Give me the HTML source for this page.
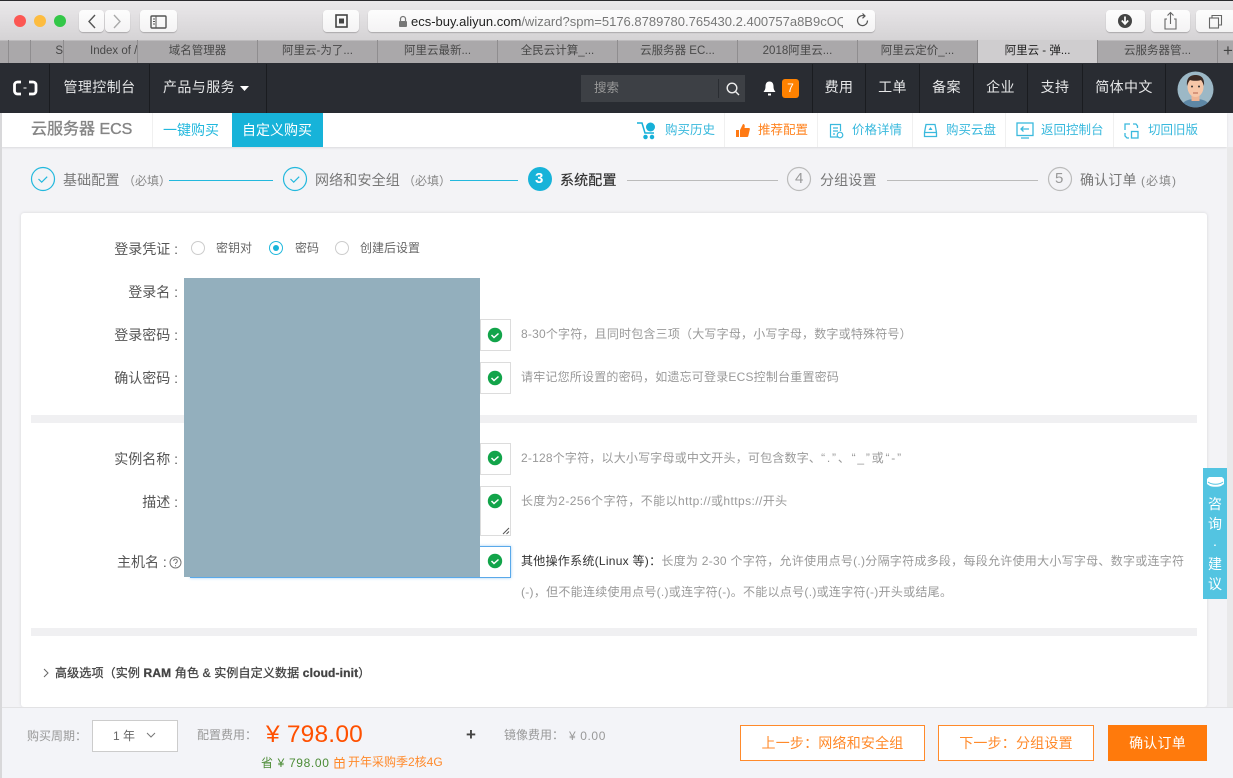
<!DOCTYPE html>
<html lang="zh-CN"><head><meta charset="utf-8"><title>阿里云 - 弹性计算</title>
<style>
html,body{margin:0;padding:0}
body{width:1233px;height:778px;overflow:hidden;position:relative;background:#f3f3f6;font-family:"Liberation Sans","Noto Sans CJK SC",sans-serif;color:#666}
div,span.a,svg{position:absolute}
.t{position:absolute;white-space:nowrap;line-height:20px}
.btn{background:linear-gradient(#fdfdfd,#f4f3f4);border-radius:4px;box-shadow:0 1px 1px rgba(0,0,0,.22);height:22px;top:10px}
.tab{position:absolute;top:40px;height:23px;width:120px;border-right:1px solid #8f8d8f;box-sizing:border-box;text-align:center;font-size:11.5px;line-height:22px;color:#484848;white-space:nowrap;overflow:hidden}
.nav{position:absolute;top:64px;height:49px;line-height:47px;color:#e6e7e8;font-size:14px;letter-spacing:.4px;text-align:center;border-right:1px solid #1a1c20;box-sizing:border-box;white-space:nowrap}
.sub{font-size:12.5px;color:#3ab9dd;top:120px}
.vd{top:113px;width:1px;height:34px;background:#f0f0f0}
.step{font-size:14px;top:170px;color:#777;letter-spacing:.15px}
.req{font-size:12px;color:#888}
.line{height:1px;top:180px}
.lb{font-size:14px;color:#555;right:1055px;text-align:right}
.inp{left:480px;width:31px;background:#fff;border:1px solid #dcdcdc;box-sizing:border-box}
.hint{left:521px;font-size:12px;color:#999}
.o{top:725px;height:36px;box-sizing:border-box;border:1px solid #ff8a2b;background:#fff;color:#ff8a2b;font-size:14px;letter-spacing:.2px;text-align:center;line-height:35px;white-space:nowrap}
</style></head><body>

<!-- Safari chrome -->
<div style="left:0;top:0;width:1233px;height:40px;background:linear-gradient(#ebe9eb,#d5d3d5)"></div>
<div style="left:0;top:0;width:1233px;height:1px;background:#2b2b2e"></div>
<svg style="left:0;top:0" width="80" height="40"><circle cx="20" cy="21" r="6" fill="#fc5753"/><circle cx="40" cy="21" r="6" fill="#fdbc40"/><circle cx="60" cy="21" r="6" fill="#33c748"/></svg>
<div class="btn" style="left:79px;width:25px"></div>
<div class="btn" style="left:105px;width:25px"></div>
<div class="btn" style="left:140px;width:37px"></div>
<div class="btn" style="left:323px;width:36px"></div>
<div class="btn" style="left:368px;width:507px"></div>
<div class="btn" style="left:1106px;width:39px"></div>
<div class="btn" style="left:1151px;width:39px"></div>
<div class="btn" style="left:1196px;width:40px"></div>
<svg style="left:79px;top:11px" width="110" height="21" fill="none" stroke="#555" stroke-width="1.400"><path d="M16 4l-6 6.500 6 6.500"/><path d="M35 4l6 6.500-6 6.500" stroke="#aaa"/><rect x="72" y="5" width="15" height="12" rx="1"/><path d="M77 5v12M74 8h2M74 10.500h2M74 13h2" stroke-width="1"/></svg>
<svg style="left:335px;top:14px" width="14" height="14"><rect x="1" y="1" width="11" height="12" fill="none" stroke="#444" stroke-width="1.600"/><rect x="4" y="4.500" width="5" height="5" fill="#444"/></svg>
<svg style="left:398px;top:15px" width="10" height="13"><path d="M2.500 6V4a2.500 2.500 0 015 0v2" fill="none" stroke="#777" stroke-width="1.200"/><rect x="1" y="6" width="8" height="6" rx="1" fill="#777"/></svg>
<div class="t" style="left:411px;top:12px;font-size:13px;color:#777;width:432px;overflow:hidden"><span style="color:#222">ecs-buy.aliyun.com</span>/wizard?spm=5176.8789780.765430.2.400757a8B9cOQ</div>
<svg style="left:855px;top:12px" width="16" height="18" fill="none" stroke="#555" stroke-width="1.200"><path d="M12.500 8.500a5 5 0 11-3-4.500"/><path d="M7.500 1.500l2.500 2.500-2.500 2.300" /></svg>
<svg style="left:1116px;top:13px" width="18" height="16"><circle cx="9" cy="8" r="7" fill="#444"/><path d="M9 3.500v6M5.800 7.500L9 11l3.200-3.500" fill="none" stroke="#fff" stroke-width="1.700"/></svg>
<svg style="left:1163px;top:11px" width="15" height="20" fill="none" stroke="#666" stroke-width="1.100"><path d="M4 8H2v10h11V8h-2M7.500 13V2M4.500 4.500l3-3 3 3"/></svg>
<svg style="left:1208px;top:14px" width="15" height="15" fill="none" stroke="#666" stroke-width="1.100"><rect x="1.500" y="4" width="9" height="10"/><path d="M4 4V1.500h9.500V11H10.500"/></svg>

<!-- tab bar -->
<div style="left:0;top:40px;width:1233px;height:24px;background:#aaa8aa;border-top:1px solid #bdbbbd;box-sizing:border-box;border-bottom:1px solid #8f8d8f"></div>
<div class="tab" style="left:0;width:9px"></div>
<div class="tab" style="left:9px;width:22px"></div>
<div class="tab" style="left:31px;width:33px;text-align:right">S</div>
<div class="tab" style="left:64px;width:74px;padding-left:26px;text-align:left">Index of /</div>
<div class="tab" style="left:138px">域名管理器</div>
<div class="tab" style="left:258px">阿里云-为了...</div>
<div class="tab" style="left:378px">阿里云最新...</div>
<div class="tab" style="left:498px">全民云计算_...</div>
<div class="tab" style="left:618px">云服务器 EC...</div>
<div class="tab" style="left:738px">2018阿里云...</div>
<div class="tab" style="left:858px">阿里云定价_...</div>
<div class="tab" style="left:978px;background:#cfcdcf;color:#222">阿里云 - 弹...</div>
<div class="tab" style="left:1098px">云服务器管...</div>
<div class="t" style="left:1223px;top:41px;font-size:17px;color:#444">+</div>

<!-- top nav -->
<div style="left:0;top:63px;width:1233px;height:50px;background:#292c32"></div>
<div class="nav" style="left:0;width:50px"></div>
<svg style="left:13px;top:80px" width="25" height="16" fill="none" stroke="#fff" stroke-width="2.800"><path d="M8 2H4.500A3 3 0 001.500 5v6a3 3 0 003 3H8M16 2h4a3 3 0 013 3v6a3 3 0 01-3 3h-4"/><path d="M10.500 8h3" stroke-width="1"/></svg>
<div class="nav" style="left:50px;width:100px">管理控制台</div>
<div class="nav" style="left:150px;width:117px;text-align:left;padding-left:13px">产品与服务</div>
<svg style="left:240px;top:86px" width="10" height="6"><path d="M0 0h9L4.500 5z" fill="#fff"/></svg>
<div style="left:581px;top:75px;width:164px;height:27px;background:#3d4045"></div>
<div class="t" style="left:594px;top:78px;font-size:12.500px;color:#999">搜索</div>
<div style="left:718px;top:79px;width:1px;height:19px;background:#2a2d32"></div>
<svg style="left:726px;top:82px" width="14" height="14" fill="none" stroke="#eee" stroke-width="1.400"><circle cx="6" cy="6" r="4.800"/><path d="M9.500 9.500L13 13"/></svg>
<svg style="left:763px;top:81px" width="13" height="15"><path d="M6.500 0.500c-3 0-4 2.300-4 5 0 3-1 4-2 5.500h12c-1-1.500-2-2.500-2-5.500 0-2.700-1-5-4-5z" fill="#fff"/><rect x="5" y="12.500" width="3" height="2" fill="#fff"/></svg>
<div style="left:782px;top:79px;width:17px;height:19px;background:#ff8200;border-radius:3px;color:#fff;font-size:12px;text-align:center;line-height:19px">7</div>
<div class="nav" style="left:812px;top:64px;width:1px;border:0;background:#1a1c20"></div>
<div class="nav" style="left:813px;width:53px">费用</div>
<div class="nav" style="left:866px;width:54px">工单</div>
<div class="nav" style="left:920px;width:54px">备案</div>
<div class="nav" style="left:974px;width:54px">企业</div>
<div class="nav" style="left:1028px;width:55px">支持</div>
<div class="nav" style="left:1083px;width:83px">简体中文</div>
<svg style="left:1177px;top:71px" width="37" height="37" viewBox="0 0 37 37"><defs><clipPath id="c"><circle cx="18.500" cy="18.500" r="18"/></clipPath></defs><circle cx="18.500" cy="18.500" r="18" fill="#9cb8c6"/><g clip-path="url(#c)"><path d="M4 37c1-7 7-9 14.500-9S32 30 33 37z" fill="#5e88a6"/><rect x="14.500" y="22" width="8" height="8" fill="#eeb595"/><ellipse cx="18.500" cy="16" rx="8" ry="10" fill="#f6c7a8"/><path d="M10 15c-1-9 4-11 8.500-11S28 6 27 15c-1-3-2-5-3-6-3 1-8 1-11 0-1 1-2 3-3 6z" fill="#3a2a24"/><circle cx="15" cy="15.500" r="1" fill="#333"/><circle cx="22" cy="15.500" r="1" fill="#333"/><path d="M16 22h5" stroke="#b5654f"/></g></svg>

<!-- sub nav -->
<div style="left:0;top:113px;width:1227px;height:34px;background:#fff;box-shadow:0 1px 2px rgba(0,0,0,.1)"></div>
<div class="t" style="left:31px;top:120px;font-size:16px;color:#858585;-webkit-text-stroke:.35px #858585">云服务器 ECS</div>
<div class="vd" style="left:152px"></div>
<div class="t" style="left:163px;top:120px;font-size:14px;color:#22b8dd">一键购买</div>
<div style="left:232px;top:113px;width:91px;height:34px;background:#17b3d9"></div>
<div class="t" style="left:242px;top:120px;font-size:14px;color:#fff">自定义购买</div>
<div class="vd" style="left:724px"></div><div class="vd" style="left:817px"></div><div class="vd" style="left:912px"></div><div class="vd" style="left:1005px"></div><div class="vd" style="left:1113px"></div>
<svg style="left:637px;top:122px" width="20" height="18" fill="none" stroke="#16b0d8" stroke-width="1.500"><path d="M0 1h5l3 10h9"/><circle cx="13.500" cy="5" r="4.500" fill="#16b0d8" stroke="none"/><circle cx="8.500" cy="15" r="1.500" fill="#16b0d8"/><circle cx="15" cy="15" r="1.500" fill="#16b0d8"/></svg>
<div class="t sub" style="left:665px">购买历史</div>
<svg style="left:736px;top:124px" width="14" height="14"><path d="M0 6h3v7H0zM4 6l3-6c2 0 2 2 1.500 4H13c1 0 1 1 .7 2l-1.400 6c-.2 1-1 1-2 1H4z" fill="#ff7a14"/></svg>
<div class="t sub" style="left:758px;color:#ff8421">推荐配置</div>
<svg style="left:829px;top:123px" width="15" height="16" fill="none" stroke="#3ab9dd" stroke-width="1.200"><path d="M9 14H1.500V1.500h10V8M4 5h5M4 8h5M4 11h2"/><circle cx="11" cy="12" r="2.800"/></svg>
<div class="t sub" style="left:852px">价格详情</div>
<svg style="left:923px;top:123px" width="15" height="15" fill="none" stroke="#3ab9dd" stroke-width="1.300"><path d="M3 1.500h9l1.500 8v4h-12v-4zM1.500 9.500h12"/><path d="M5.500 7l2-3 2 3z" fill="#3ab9dd" stroke="none"/></svg>
<div class="t sub" style="left:946px">购买云盘</div>
<svg style="left:1016px;top:122px" width="18" height="17" fill="none" stroke="#3ab9dd" stroke-width="1.300"><rect x="1" y="1" width="16" height="12.500"/><path d="M5 16h8M13 7H5M7.500 4.500L5 7l2.500 2.500"/></svg>
<div class="t sub" style="left:1041px">返回控制台</div>
<svg style="left:1124px;top:123px" width="15" height="16" fill="none" stroke="#3ab9dd" stroke-width="1.300"><path d="M6 1H1v6M9 1h3l1.500 2v2M1 10v3l2 2h2"/><rect x="7.500" y="8.500" width="6.500" height="6.500"/></svg>
<div class="t sub" style="left:1148px">切回旧版</div>

<!-- steps -->
<svg style="left:30px;top:166px" width="1050" height="28" fill="none" stroke-width="1.200">
<circle cx="13" cy="13" r="11.500" stroke="#22b8dd"/><path d="M8.500 13l3.200 3.200 5.500-5.500" stroke="#22b8dd"/>
<circle cx="265" cy="13" r="11.500" stroke="#22b8dd"/><path d="M260.500 13l3.200 3.200 5.500-5.500" stroke="#22b8dd"/>
<circle cx="510" cy="13" r="12" fill="#17b3d9"/>
<circle cx="769" cy="13" r="11.500" stroke="#bbb"/>
<circle cx="1030" cy="13" r="11.500" stroke="#bbb"/>
</svg>
<div class="t" style="left:535px;top:169px;font-size:15px;font-weight:700;color:#fff">3</div>
<div class="t" style="left:795px;top:169px;font-size:15px;color:#999">4</div>
<div class="t" style="left:1055px;top:169px;font-size:15px;color:#999">5</div>
<div class="t step" style="left:63px">基础配置</div><div class="t req" style="left:123px;top:171px">（必填）</div>
<div class="line" style="left:169px;width:104px;background:#22b8dd"></div>
<div class="t step" style="left:315px">网络和安全组</div><div class="t req" style="left:403px;top:171px">（必填）</div>
<div class="line" style="left:450px;width:68px;background:#22b8dd"></div>
<div class="t step" style="left:560px;color:#333;-webkit-text-stroke:.2px #333">系统配置</div>
<div class="line" style="left:627px;width:151px;background:#bbb"></div>
<div class="t step" style="left:820px">分组设置</div>
<div class="line" style="left:887px;width:151px;background:#bbb"></div>
<div class="t step" style="left:1080px">确认订单</div><div class="t req" style="left:1141px;top:171px;letter-spacing:1px">(必填)</div>

<!-- card -->
<div style="left:21px;top:213px;width:1186px;height:494px;background:#fff;border-radius:3px;box-shadow:0 0 3px rgba(0,0,0,.12)"></div>
<div style="left:31px;top:415px;width:1166px;height:8px;background:#f0f0f2"></div>
<div style="left:31px;top:628px;width:1166px;height:8px;background:#f0f0f2"></div>

<div class="t lb" style="top:239px">登录凭证 :</div>
<svg style="left:190px;top:240px" width="160" height="16" fill="none"><circle cx="8" cy="8" r="6.500" stroke="#ccc"/><circle cx="86" cy="8" r="6.500" stroke="#22b8dd"/><circle cx="86" cy="8" r="3" fill="#17b3d9"/><circle cx="152" cy="8" r="6.500" stroke="#ccc"/></svg>
<div class="t" style="left:216px;top:238px;font-size:12px;color:#666">密钥对</div>
<div class="t" style="left:295px;top:238px;font-size:12px;color:#666">密码</div>
<div class="t" style="left:360px;top:238px;font-size:12px;color:#666">创建后设置</div>
<div class="t lb" style="top:282px">登录名 :</div>
<div class="t lb" style="top:325px">登录密码 :</div>
<div class="t lb" style="top:368px">确认密码 :</div>
<div class="t lb" style="top:449px">实例名称 :</div>
<div class="t lb" style="top:492px">描述 :</div>
<div class="t" style="left:117px;top:552px;font-size:14px;color:#555">主机名 :</div>
<svg style="left:169px;top:556px" width="13" height="13" fill="none" stroke="#777"><circle cx="6.500" cy="6.500" r="5.500"/><path d="M4.700 5a1.800 1.800 0 113 1.300c-.8.600-1.200.9-1.200 1.700M6.500 9.300v1"/></svg>

<div class="inp" style="top:319px;height:32px"></div>
<div class="inp" style="top:362px;height:32px"></div>
<div class="inp" style="top:443px;height:32px"></div>
<div class="inp" style="top:486px;height:50px"></div>
<div style="left:190px;top:546px;width:321px;height:32px;border:1px solid #5aa9ea;box-sizing:border-box;box-shadow:0 0 3px #a5d0f3;background:#fff"></div>
<svg style="left:500px;top:525px" width="11" height="10" stroke="#555" fill="none"><path d="M3 9l6-6M6.500 9L9 6.500"/></svg>
<div style="left:184px;top:278px;width:296px;height:299px;background:#93afbd"></div>
<svg style="left:487px;top:327px" width="16" height="242"><defs><g id="k"><circle cx="8" cy="0" r="7.200" fill="#12a44a"/><path d="M4.500 0l2.500 2.500 4.500-4" fill="none" stroke="#fff" stroke-width="1.500"/></g></defs><use href="#k" y="8"/><use href="#k" y="51"/><use href="#k" y="131"/><use href="#k" y="174"/><use href="#k" y="234"/></svg>

<div class="t hint" style="top:324px;letter-spacing:.2px">8-30个字符，且同时包含三项（大写字母，小写字母，数字或特殊符号）</div>
<div class="t hint" style="top:367px;letter-spacing:.2px">请牢记您所设置的密码，如遗忘可登录ECS控制台重置密码</div>
<div class="t hint" style="top:448px;letter-spacing:.2px">2-128个字符，以大小写字母或中文开头，可包含数字、<span style="letter-spacing:1.800px">“.”、“_”或“-”</span></div>
<div class="t hint" style="top:491px;letter-spacing:.42px">长度为2-256个字符，不能以http://或https://开头</div>
<div class="t hint" style="top:551px;letter-spacing:.27px"><span style="color:#333">其他操作系统(Linux 等)：</span>长度为 2-30 个字符，允许使用点号(.)分隔字符成多段，每段允许使用大小写字母、数字或连字符</div>
<div class="t hint" style="top:582px;letter-spacing:.28px">(-)，但不能连续使用点号(.)或连字符(-)。不能以点号(.)或连字符(-)开头或结尾。</div>

<svg style="left:42px;top:668px" width="8" height="10" fill="none" stroke="#666"><path d="M2 1l4 4-4 4"/></svg>
<div class="t" style="left:55px;top:663px;font-size:12px;letter-spacing:.15px;color:#444;-webkit-text-stroke:.3px #444">高级选项（实例 <b>RAM</b> 角色 &amp; 实例自定义数据 <b>cloud-init</b>）</div>

<!-- side tab -->
<div style="left:1203px;top:468px;width:24px;height:131px;background:#53c4e1"></div>
<svg style="left:1207px;top:476px" width="17" height="12"><path d="M2 1h13l2 2v5l-3 2c-3 1-8 1-11 0L0 8V3z" fill="#fff"/><path d="M1 6c4 3 11 3 15 0" stroke="#53c4e1" fill="none"/></svg>
<div class="t" style="left:1207px;top:494px;font-size:14px;color:#fff;line-height:20px;width:16px;text-align:center;white-space:normal">咨<br>询<br>·<br>建<br>议</div>
<div style="left:1227px;top:147px;width:6px;height:560px;background:#e9e9ea"></div>

<!-- bottom bar -->
<div style="left:0;top:707px;width:1233px;height:71px;background:#f3f4f8;border-top:1px solid #e2e2e4;box-sizing:border-box"></div>
<div style="left:0;top:113px;width:2px;height:665px;background:#d8d8da"></div>
<div class="t" style="left:27px;top:726px;font-size:12px;color:#999">购买周期：</div>
<div style="left:92px;top:720px;width:86px;height:32px;box-sizing:border-box;border:1px solid #ccc;background:#fff"></div>
<div class="t" style="left:113px;top:726px;font-size:12px;color:#666">1 年</div>
<svg style="left:146px;top:732px" width="10" height="7" fill="none" stroke="#777"><path d="M1 1l4 4 4-4"/></svg>
<div class="t" style="left:197px;top:725px;font-size:12px;color:#999">配置费用：</div>
<div class="t" style="left:266px;top:722px;font-size:24.500px;letter-spacing:.2px;line-height:26px;color:#ff5000">¥ 798.00</div>
<div class="t" style="left:466px;top:725px;font-size:17px;color:#444;font-weight:700">+</div>
<div class="t" style="left:504px;top:725px;font-size:12px;color:#999">镜像费用：</div>
<div class="t" style="left:569px;top:726px;font-size:12px;letter-spacing:.6px;color:#999">¥ 0.00</div>
<div class="t" style="left:261px;top:753px;font-size:12px;letter-spacing:.65px;color:#4b8b35">省 ¥ 798.00</div>
<svg style="left:334px;top:756px" width="11" height="13" fill="none" stroke="#ff8a2b"><rect x="1" y="3.500" width="9" height="8.500"/><path d="M5.500 3.500V12M1 6.500h9M3 3.500L2.500 1M8 3.500L8.500 1"/></svg>
<div class="t" style="left:348px;top:752px;font-size:12px;color:#ff8a2b">开年采购季2核4G</div>
<div class="o" style="left:740px;width:185px">上一步：网络和安全组</div>
<div class="o" style="left:938px;width:156px">下一步：分组设置</div>
<div class="o" style="left:1108px;width:99px;background:#ff7a0c;color:#fff;border-color:#ff7a0c">确认订单</div>
</body></html>
